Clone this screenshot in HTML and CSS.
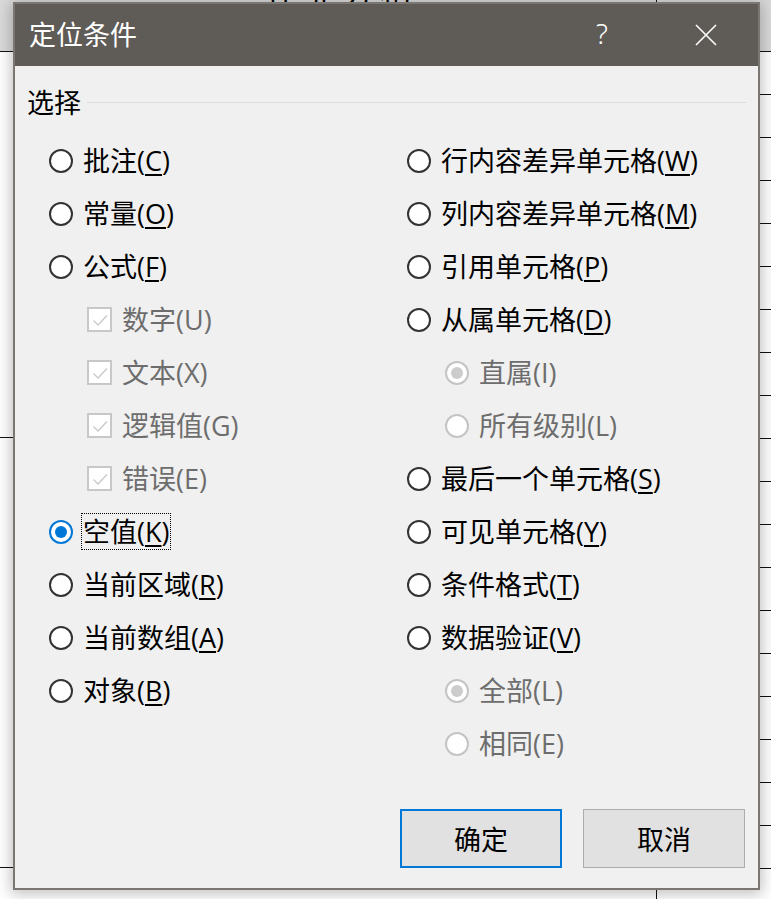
FILE: index.html
```html
<!DOCTYPE html>
<html lang="zh-CN">
<head>
<meta charset="utf-8">
<title>定位条件</title>
<link rel="stylesheet" href="styles.css">
</head>
<body>
<div class="sheet">
  <div class="sheet-main">
    <div class="cell head"><span class="head-text">作业分格</span></div>
    <div class="cell block-a"></div>
    <div class="cell block-b"></div>
  </div>
  <div class="sheet-side">
    <div class="cell head"></div>
    <div class="cell row"></div><div class="cell row"></div><div class="cell row"></div><div class="cell row"></div>
    <div class="cell row"></div><div class="cell row"></div><div class="cell row"></div><div class="cell row"></div>
    <div class="cell row"></div><div class="cell row"></div><div class="cell row"></div><div class="cell row"></div>
    <div class="cell row"></div><div class="cell row"></div><div class="cell row"></div><div class="cell row"></div>
    <div class="cell row"></div><div class="cell row"></div><div class="cell row"></div><div class="cell row"></div>
  </div>
</div>

<div class="dialog">
  <div class="titlebar">
    <span class="title">定位条件</span>
    <span class="tb-btn help">?</span>
    <span class="tb-btn close"><svg width="22" height="22" viewBox="0 0 22 22"><path d="M1 1 L21 21 M21 1 L1 21" stroke="#fff" stroke-width="1.6" fill="none"/></svg></span>
  </div>
  <div class="content">
    <div class="legend"><span class="legend-text">选择</span><span class="rule"></span></div>
    <div class="options">
      <div class="col">
        <div class="opt"><span class="radio"></span><span class="label">批注(<u>C</u>)</span></div>
        <div class="opt"><span class="radio"></span><span class="label">常量(<u>O</u>)</span></div>
        <div class="opt"><span class="radio"></span><span class="label">公式(<u>F</u>)</span></div>
        <div class="opt sub disabled"><span class="check"><svg width="20" height="20" viewBox="0 0 20 20"><path d="M3.5 10.5 L8 15 L17 5.5" stroke="#c8c8c8" stroke-width="1.3" fill="none"/></svg></span><span class="label">数字(U)</span></div>
        <div class="opt sub disabled"><span class="check"><svg width="20" height="20" viewBox="0 0 20 20"><path d="M3.5 10.5 L8 15 L17 5.5" stroke="#c8c8c8" stroke-width="1.3" fill="none"/></svg></span><span class="label">文本(X)</span></div>
        <div class="opt sub disabled"><span class="check"><svg width="20" height="20" viewBox="0 0 20 20"><path d="M3.5 10.5 L8 15 L17 5.5" stroke="#c8c8c8" stroke-width="1.3" fill="none"/></svg></span><span class="label">逻辑值(G)</span></div>
        <div class="opt sub disabled"><span class="check"><svg width="20" height="20" viewBox="0 0 20 20"><path d="M3.5 10.5 L8 15 L17 5.5" stroke="#c8c8c8" stroke-width="1.3" fill="none"/></svg></span><span class="label">错误(E)</span></div>
        <div class="opt"><span class="radio checked"></span><span class="label focus">空值(<u>K</u>)</span></div>
        <div class="opt"><span class="radio"></span><span class="label">当前区域(<u>R</u>)</span></div>
        <div class="opt"><span class="radio"></span><span class="label">当前数组(<u>A</u>)</span></div>
        <div class="opt"><span class="radio"></span><span class="label">对象(<u>B</u>)</span></div>
      </div>
      <div class="col">
        <div class="opt"><span class="radio"></span><span class="label">行内容差异单元格(<u>W</u>)</span></div>
        <div class="opt"><span class="radio"></span><span class="label">列内容差异单元格(<u>M</u>)</span></div>
        <div class="opt"><span class="radio"></span><span class="label">引用单元格(<u>P</u>)</span></div>
        <div class="opt"><span class="radio"></span><span class="label">从属单元格(<u>D</u>)</span></div>
        <div class="opt sub disabled"><span class="radio checked"></span><span class="label">直属(I)</span></div>
        <div class="opt sub disabled"><span class="radio"></span><span class="label">所有级别(L)</span></div>
        <div class="opt"><span class="radio"></span><span class="label">最后一个单元格(<u>S</u>)</span></div>
        <div class="opt"><span class="radio"></span><span class="label">可见单元格(<u>Y</u>)</span></div>
        <div class="opt"><span class="radio"></span><span class="label">条件格式(<u>T</u>)</span></div>
        <div class="opt"><span class="radio"></span><span class="label">数据验证(<u>V</u>)</span></div>
        <div class="opt sub disabled"><span class="radio checked"></span><span class="label">全部(L)</span></div>
        <div class="opt sub disabled"><span class="radio"></span><span class="label">相同(E)</span></div>
      </div>
    </div>
    <div class="buttons">
      <button class="btn primary">确定</button>
      <button class="btn">取消</button>
    </div>
  </div>
</div>
</body>
</html>
```

FILE: styles.css
```css
* { box-sizing: border-box; }

html, body {
  margin: 0;
  padding: 0;
  width: 771px;
  height: 899px;
  overflow: hidden;
  background: #ffffff;
  font-family: "Open Sans", "Noto Sans CJK SC", sans-serif;
}

body { position: relative; }

/* background spreadsheet */
.sheet {
  display: flex;
  width: 771px;
  height: 899px;
}
.sheet-main {
  width: 656px;
  display: flex;
  flex-direction: column;
}
.sheet-side {
  flex: 1;
  display: flex;
  flex-direction: column;
  border-left: 1px solid #111;
}
.cell {
  border-bottom: 1px solid #111;
  flex: none;
}
.head {
  height: 52px;
  background: #dadada;
  overflow: hidden;
  display: flex;
  align-items: flex-start;
}
.head-text {
  margin-top: -25px;
  margin-left: 266px;
  font-family: "Noto Sans CJK SC", sans-serif;
  font-size: 32px;
  line-height: 30px;
  letter-spacing: 6px;
  color: #000;
}
.block-a { height: 386px; }
.block-b { height: 430px; }
.row { height: 43px; }

/* dialog window */
.dialog {
  position: absolute;
  left: 13px;
  top: 2px;
  width: 747px;
  height: 888px;
  border: 2px solid #7a7672;
  background: #f0f0f0;
  display: flex;
  flex-direction: column;
  box-shadow: 0 2px 14px 2px rgba(0, 0, 0, 0.25);
}

.titlebar {
  height: 62px;
  flex: none;
  background: #5f5b57;
  display: flex;
  align-items: center;
  color: #fff;
}
.title {
  padding-left: 14px;
  font-size: 27px;
  flex: 1;
  line-height: 62px;
}
.tb-btn {
  width: 104px;
  height: 62px;
  display: flex;
  align-items: center;
  justify-content: center;
}
.help {
  font-family: "Noto Sans", sans-serif;
  font-size: 28px;
  font-weight: 300;
  padding-bottom: 4px;
}
.close svg { display: block; }

.content {
  flex: 1;
  display: flex;
  flex-direction: column;
  padding: 19px 0 20px 0;
  color: #000;
  font-size: 27px;
}

.legend {
  display: flex;
  align-items: center;
  height: 36px;
  padding-left: 12px;
  padding-right: 12px;
}
.legend-text { line-height: 36px; }
.rule {
  flex: 1;
  height: 1px;
  background: #dcdcdc;
  margin-left: 6px;
  margin-top: -1px;
}

.options {
  margin-top: 13px;
  padding-left: 34px;
  display: grid;
  grid-template-columns: 358px auto;
}
.col {
  display: flex;
  flex-direction: column;
}
.opt {
  height: 53px;
  display: flex;
  align-items: center;
}
.opt.sub { padding-left: 38px; }

.radio {
  width: 24px;
  height: 24px;
  border-radius: 50%;
  border: 2px solid #333;
  background: #fff;
  flex: none;
  display: flex;
  align-items: center;
  justify-content: center;
}
.radio.checked { border-color: #0078d7; }
.radio.checked::after {
  content: "";
  width: 12px;
  height: 12px;
  border-radius: 50%;
  background: #0078d7;
}
.disabled .radio { border-color: #c4c4c4; }
.disabled .radio.checked::after { background: #cccccc; }

.check {
  width: 25px;
  height: 25px;
  border: 2px solid #c8c8c8;
  background: #fff;
  flex: none;
  display: flex;
  align-items: center;
  justify-content: center;
}
.check svg { display: block; }

.label {
  margin-left: 8px;
  line-height: 35px;
  padding: 0 1px;
  border: 1px solid transparent;
  white-space: nowrap;
}
.label.focus { border: 1px dotted #000; }
.label u {
  text-decoration-thickness: 1.5px;
  text-underline-offset: 3px;
}
.disabled .label { color: #6d6d6d; }

.buttons {
  margin-top: auto;
  display: flex;
  justify-content: flex-end;
  gap: 21px;
  padding-right: 13px;
}
.btn {
  width: 162px;
  height: 59px;
  background: #e1e1e1;
  border: 1px solid #adadad;
  font-family: "Noto Sans CJK SC", sans-serif;
  font-size: 27px;
  color: #000;
  padding: 0;
}
.btn.primary { border: 2px solid #0078d7; }
```
